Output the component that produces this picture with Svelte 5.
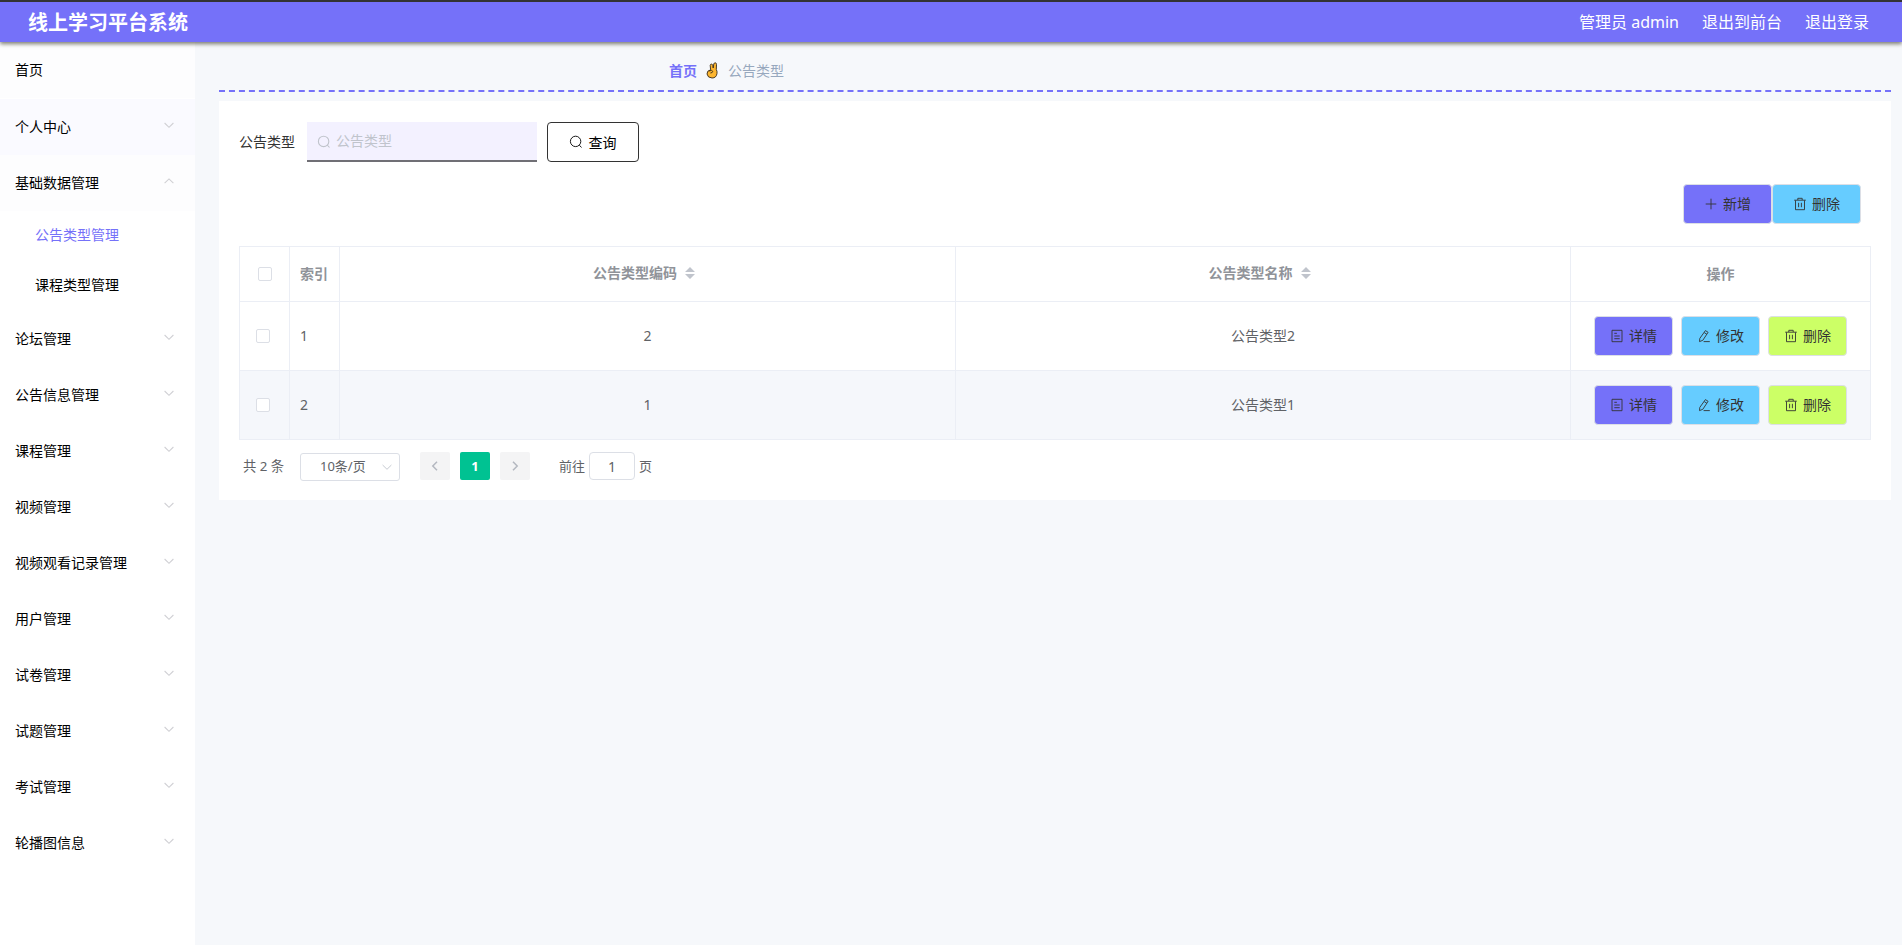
<script lang="ts">
    type MenuItem = { name: string; open?: boolean; tinted?: boolean; children?: string[] };
    type Row = { code: string; name: string };

    const menus: MenuItem[] = [
        { name: '个人中心', tinted: true },
        { name: '基础数据管理', open: true, children: ['公告类型管理', '课程类型管理'] },
        { name: '论坛管理' },
        { name: '公告信息管理' },
        { name: '课程管理' },
        { name: '视频管理' },
        { name: '视频观看记录管理' },
        { name: '用户管理' },
        { name: '试卷管理' },
        { name: '试题管理' },
        { name: '考试管理' },
        { name: '轮播图信息' },
    ];

    const rows: Row[] = [
        { code: '2', name: '公告类型2' },
        { code: '1', name: '公告类型1' },
    ];

    let active = $state('公告类型管理');
    let keyword = $state('');
    let page = $state('1');

    const icons = {
        search: 'M6.6 1.2a5.2 5.2 0 1 0 0 10.4a5.2 5.2 0 1 0 0-10.4M10.4 10.2l2.1 2.3',
        plus: 'M7 1.7v10.6M1.7 7h10.6',
        trash: 'M1.2 3.2h11.6M4.8 3V1.3h4.4V3M2.5 3.4v9.3h9V3.4M5.6 5.8v4.4M8.4 5.8v4.4',
        doc: 'M2 1.3h10v11.4H2zM4.3 4.3h2.6M4.3 7h5.4M4.3 9.7h5.4',
        edit: 'M8.4 1.6l2.7 1.7l-5.3 8l-3.3 1.3l.3-3.2zM7.2 3.6l2.6 1.6M6.6 12.6h6.2',
        down: 'M2.6 5l4.4 4.3L11.4 5',
        up: 'M2.6 9.2L7 4.9l4.4 4.3',
        left: 'M9 2.8L4.8 7L9 11.2',
        right: 'M5 2.8L9.2 7L5 11.2',
    };
</script>

{#snippet icon(name: keyof typeof icons)}
    <svg class="icon" viewBox="0 0 14 14"><path d={icons[name]} /></svg>
{/snippet}

<div class="page">
    <header class="topbar">
        <h1>线上学习平台系统</h1>
        <nav class="user-links">
            <span>管理员 admin</span>
            <span>退出到前台</span>
            <span>退出登录</span>
        </nav>
    </header>

    <div class="body">
        <aside class="sidebar">
            <div class="menu-item home">首页</div>
            {#each menus as menu}
                <div class="menu-item" class:tinted={menu.tinted} class:open={menu.open}>
                    <span>{menu.name}</span>
                    {@render icon(menu.open ? 'up' : 'down')}
                </div>
                {#if menu.open}
                    {#each menu.children ?? [] as child}
                        <button class="sub-item" class:active={active === child} onclick={() => (active = child)}>{child}</button>
                    {/each}
                {/if}
            {/each}
        </aside>

        <main>
            <div class="breadcrumb">
                <b>首页</b>
                <svg class="hand" viewBox="0 0 12 17">
                    <path d="M4.6 7.8L4.2 3.4Q4.4 2 5.5 2.1Q6.6 2.2 6.8 3.6L7.2 6L7.8 1.9Q8.2 .7 9.3 .8Q10.5 1 10.5 2.4L10.3 7.6Q11.3 9 11 11.4Q10.4 16 6 16Q1.6 15.8 1 12Q.8 8.6 4.6 7.8Z" />
                    <path class="fold" d="M2.8 9Q6.2 7.6 6.8 9.4Q6.6 10.9 4.4 11" />
                </svg>
                <span>公告类型</span>
            </div>

            <section class="card">
                <div class="search">
                    <label for="keyword">公告类型</label>
                    <div class="search-input">
                        {@render icon('search')}
                        <input id="keyword" placeholder="公告类型" bind:value={keyword} />
                    </div>
                    <button class="query">{@render icon('search')}查询</button>
                </div>

                <div class="toolbar">
                    <button class="btn wide violet">{@render icon('plus')}新增</button>
                    <button class="btn wide blue">{@render icon('trash')}删除</button>
                </div>

                <table>
                    <colgroup>
                        <col class="w50" /><col class="w50" /><col class="w616" /><col class="w615" /><col />
                    </colgroup>
                    <thead>
                        <tr>
                            <th class="check"><i class="box"></i></th>
                            <th class="left">索引</th>
                            {#each ['公告类型编码', '公告类型名称'] as title}
                                <th>
                                    <div class="sortable">
                                        {title}
                                        <svg class="sort" viewBox="0 0 10 12"><path d="M5 0l5 5H0zM0 7h10l-5 5z" /></svg>
                                    </div>
                                </th>
                            {/each}
                            <th>操作</th>
                        </tr>
                    </thead>
                    <tbody>
                        {#each rows as row, i}
                            <tr class:striped={i % 2 === 1}>
                                <td class="check"><i class="box"></i></td>
                                <td class="left">{i + 1}</td>
                                <td>{row.code}</td>
                                <td>{row.name}</td>
                                <td class="check">
                                    <div class="actions">
                                        <button class="btn violet">{@render icon('doc')}详情</button>
                                        <button class="btn blue">{@render icon('edit')}修改</button>
                                        <button class="btn lime">{@render icon('trash')}删除</button>
                                    </div>
                                </td>
                            </tr>
                        {/each}
                    </tbody>
                </table>

                <div class="pagination">
                    <span class="total">共 2 条</span>
                    <div class="size"><span>10条/页</span>{@render icon('down')}</div>
                    <button class="pager">{@render icon('left')}</button>
                    <button class="pager current">1</button>
                    <button class="pager">{@render icon('right')}</button>
                    <span class="goto">前往</span>
                    <input class="jump" bind:value={page} />
                    <span>页</span>
                </div>
            </section>
        </main>
    </div>
</div>

<style>
    :global(body) {
        margin: 0;
        background: #f6f8fb;
    }

    .page, .page :is(button, input) {
        font-family: "Noto Sans", "Noto Sans CJK SC", sans-serif;
        font-size: 14px;
    }

    .page, .page :global(*) {
        box-sizing: border-box;
    }

    .page {
        display: flex;
        flex-direction: column;
        height: 100vh;
        overflow: hidden;
        color: #333;
    }

    button {
        margin: 0;
        cursor: pointer;
    }

    .icon {
        flex: none;
        width: 14px;
        height: 14px;
        fill: none;
        stroke: currentColor;
        stroke-width: 0.9;
    }

    .topbar {
        position: relative;
        z-index: 1;
        flex: none;
        display: flex;
        justify-content: space-between;
        align-items: center;
        height: 42px;
        padding: 0 33px 0 28px;
        border-top: 2px solid #333;
        background: #7571f9;
        box-shadow: 0 2px 4px rgba(40, 40, 20, 0.6);
        color: #fff;
    }

    h1 {
        margin: 0;
        padding-top: 2px;
        font-size: 20px;
        line-height: 38px;
    }

    .user-links {
        display: flex;
        gap: 23px;
        padding-bottom: 2px;
        font-size: 16px;
    }

    .body {
        flex: 1;
        display: flex;
    }

    .sidebar {
        flex: none;
        width: 195px;
        background: #fff;
        color: #000;
    }

    .menu-item {
        display: flex;
        justify-content: space-between;
        align-items: center;
        height: 56px;
        padding: 0 19px 2px 15px;
    }

    .home {
        margin-bottom: 1px;
        background: #fdfdfe;
    }

    .tinted {
        background: #fafaff;
    }

    .open {
        background: #fdfdfe;
    }

    .menu-item .icon {
        margin-top: -3px;
        stroke: #d0d0d4;
        stroke-width: 1.1;
    }

    .sub-item {
        display: block;
        width: 100%;
        height: 50px;
        padding: 0 0 4px 35px;
        border: none;
        background: #fff;
        color: #000;
        text-align: left;
    }

    .sub-item.active {
        color: #7571f9;
    }

    main {
        flex: 1;
        padding: 0 11px 0 24px;
    }

    .breadcrumb {
        display: flex;
        align-items: center;
        height: 50px;
        margin-bottom: 9px;
        padding: 7px 0 0 450px;
        border-bottom: 2px dashed #7571f9;
        color: #97a8be;
    }

    .breadcrumb b {
        color: #7571f9;
        font-weight: 600;
    }

    .hand {
        width: 12px;
        height: 17px;
        margin: 2px 10px 0 9px;
        fill: #fdb62f;
        stroke: #352a1c;
        stroke-width: 0.9;
    }

    .hand .fold {
        fill: none;
    }

    .card {
        height: 399px;
        padding: 21px 20px 0;
        background: #fff;
    }

    .search {
        display: flex;
        align-items: center;
        height: 40px;
    }

    .search label {
        padding-bottom: 2px;
    }

    .search-input {
        display: flex;
        align-items: center;
        gap: 5px;
        width: 230px;
        height: 40px;
        margin: 0 10px 0 12px;
        padding-left: 10px;
        border-bottom: 2px solid #706f75;
        background: #f3f1ff;
        color: #c0c4cc;
    }

    .search-input .icon {
        margin-top: 1px;
        stroke-width: 1.1;
    }

    .search-input input {
        width: 180px;
        padding: 0 0 2px;
        border: none;
        outline: none;
        background: none;
    }

    .search-input input::placeholder {
        color: #c0c4cc;
    }

    .query {
        display: flex;
        justify-content: center;
        align-items: center;
        gap: 6px;
        width: 92px;
        height: 40px;
        padding: 0 1px 1px 0;
        border: 1px solid #333;
        border-radius: 4px;
        background: #fff;
        color: #000;
    }

    .toolbar {
        display: flex;
        justify-content: flex-end;
        margin: 22px 10px 22px 0;
    }

    .btn {
        display: flex;
        align-items: center;
        gap: 5px;
        height: 40px;
        padding: 0 15px 2px;
        border: 1px solid #dcdfe6;
        border-radius: 4px;
        color: #333;
    }

    .btn.wide {
        padding: 0 20px 2px;
    }

    .btn .icon {
        margin-top: 2px;
    }

    .violet {
        background: #7571f9;
    }

    .blue {
        background: #66ccff;
    }

    .lime {
        background: #ccff66;
    }

    table {
        width: 1632px;
        border-collapse: collapse;
        table-layout: fixed;
        color: #606266;
    }

    .w50 {
        width: 50px;
    }

    .w616 {
        width: 616px;
    }

    .w615 {
        width: 615px;
    }

    th, td {
        padding: 0 0 2px;
        border: 1px solid #ebeef5;
        text-align: center;
    }

    th {
        height: 55px;
        color: #909399;
        font-weight: 600;
    }

    td {
        height: 69px;
    }

    .check {
        padding: 0;
    }

    .striped {
        background: #f5f7fb;
    }

    .left {
        padding-left: 10px;
        text-align: left;
    }

    .box {
        display: block;
        width: 14px;
        height: 14px;
        margin-left: 16px;
        border: 1px solid #dcdfe6;
        border-radius: 2px;
        background: #fff;
    }

    th .box {
        margin-left: 18px;
    }

    .sortable, .actions {
        display: flex;
        justify-content: center;
        align-items: center;
        gap: 8px;
    }

    .sortable {
        padding: 0 7px 2px 0;
    }

    .sort {
        width: 10px;
        height: 12px;
        margin-top: 2px;
        fill: #c0c4cc;
    }

    .pagination {
        display: flex;
        align-items: center;
        height: 28px;
        margin-top: 12px;
        padding-left: 4px;
        color: #606266;
        font-size: 13px;
    }

    .pagination span {
        padding-bottom: 2px;
    }

    .total {
        width: 57px;
        font-size: 13.3px;
    }

    .size {
        display: flex;
        justify-content: space-between;
        align-items: center;
        width: 100px;
        height: 28px;
        margin: 2px 20px 0 0;
        padding: 0 5px 0 19px;
        border: 1px solid #dcdfe6;
        border-radius: 3px;
    }

    .size span {
        padding-bottom: 3px;
    }

    .size .icon {
        stroke: #c0c4cc;
    }

    .page .pager {
        display: flex;
        justify-content: center;
        align-items: center;
        width: 30px;
        height: 28px;
        margin-right: 10px;
        padding: 0;
        border: none;
        border-radius: 2px;
        background: #f4f4f5;
        color: #b4b8c0;
        font-size: 13px;
    }

    .pager .icon {
        stroke-width: 1.5;
    }

    .page .pager.current {
        background: #00c292;
        color: #fff;
        font-weight: 700;
    }

    .goto {
        margin-left: 19px;
    }

    .page .jump {
        width: 46px;
        height: 28px;
        margin: 0 4px;
        padding: 0;
        border: 1px solid #dcdfe6;
        border-radius: 4px;
        color: #606266;
        text-align: center;
    }
</style>
